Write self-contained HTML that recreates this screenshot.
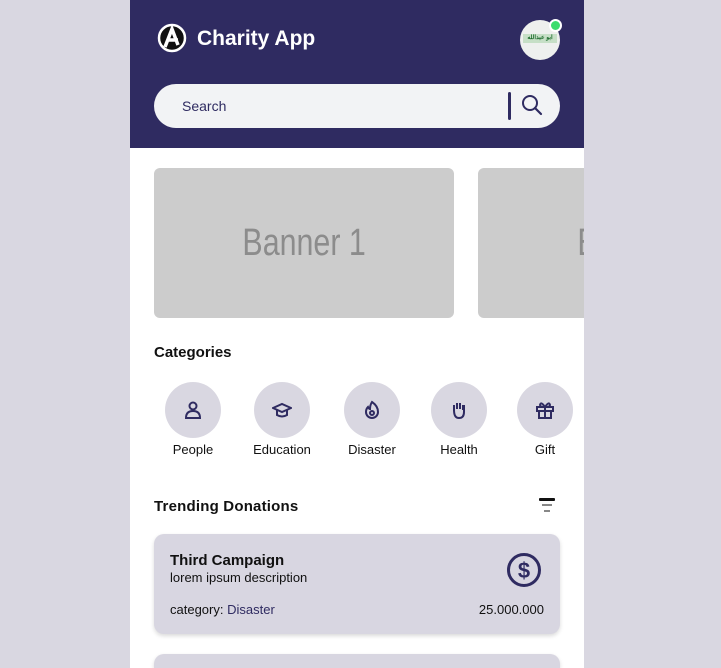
<!DOCTYPE html>
<html><head><style>
*{margin:0;padding:0;box-sizing:border-box}
body{width:721px;height:668px;background:#d9d7e1;font-family:"Liberation Sans",sans-serif;overflow:hidden;position:relative}
.ph{position:absolute;left:130px;top:0;width:454px;height:668px;background:#fff;overflow:hidden}
.hd{position:absolute;left:0;top:0;width:454px;height:148px;background:#2f2b61}
.t{position:absolute;color:#111}
.circ{position:absolute;width:56px;height:56px;border-radius:50%;background:#d9d7e1;top:382px;display:flex;align-items:center;justify-content:center}
.lab{position:absolute;top:442px;font-size:13px;color:#111;width:90px;text-align:center}
.card{position:absolute;left:24px;width:406px;height:100px;background:#d8d6e1;border-radius:10px;box-shadow:0 2px 4px rgba(0,0,0,.15)}
</style></head><body>
<div class="ph">
<div class="hd">
<svg style="position:absolute;left:27px;top:23px" width="30" height="30" viewBox="0 0 30 30"><circle cx="15" cy="15" r="13" fill="#111" stroke="#fff" stroke-width="2.5"/><path d="M8 24 L15 6 L21 22 M11 17 H21" stroke="#fff" stroke-width="3.5" fill="none"/></svg>
<div style="position:absolute;left:67px;top:27px;color:#fff;font-size:21px;font-weight:bold">Charity App</div>
<div style="position:absolute;left:390px;top:20px;width:40px;height:40px;border-radius:50%;background:#eef0ee;overflow:hidden"><div style="position:absolute;left:3px;top:14px;width:34px;height:9px;background:#c6dfc6;color:#1a6a2a;font-size:6px;text-align:center;font-weight:bold">ابو عبدالله</div></div>
<div style="position:absolute;left:419px;top:19px;width:13px;height:13px;border-radius:50%;background:#3ddc6d;border:2px solid #fff"></div>
<div style="position:absolute;left:24px;top:84px;width:406px;height:44px;border-radius:22px;background:#f2f3f5">
<div style="position:absolute;left:28px;top:14px;font-size:14px;color:#2f2b61">Search</div>
<div style="position:absolute;left:354px;top:8px;width:3px;height:28px;background:#2f2b61;border-radius:2px"></div>
<svg style="position:absolute;left:366px;top:9px" width="24" height="24" viewBox="0 0 24 24"><circle cx="10" cy="10" r="7" stroke="#2f2b61" stroke-width="2" fill="none"/><path d="M15 15 L21 21" stroke="#2f2b61" stroke-width="2.2" stroke-linecap="round"/></svg>
</div>
</div>
<div style="position:absolute;left:24px;top:168px;width:300px;height:150px;background:#ccc;border-radius:6px;display:flex;align-items:center;justify-content:center;color:#8c8c8c;font-size:38px"><span style="transform:scaleX(.8);display:inline-block">Banner 1</span></div>
<div style="position:absolute;left:348px;top:168px;width:300px;height:150px;background:#ccc;border-radius:6px;color:#8c8c8c;font-size:38px;line-height:150px;padding-left:84px"><span style="transform:scaleX(.8);display:inline-block">Banner 2</span></div>
<div class="t" style="left:24px;top:344px;font-size:15px;font-weight:bold">Categories</div>
<div class="circ" style="left:35px"><svg width="20" height="20" viewBox="0 0 20 20" fill="none" stroke="#2f2b61" stroke-width="2"><circle cx="10" cy="6" r="3.5"/><path d="M3 18 Q3 11 10 11 Q17 11 17 18 Z"/></svg></div>
<div class="circ" style="left:124px"><svg width="20" height="20" viewBox="0 0 20 20" fill="none" stroke="#2f2b61" stroke-width="2"><path d="M1 8 L10 4 L19 8 L10 12 Z M5 10 V15 Q10 18 15 15 V10"/></svg></div>
<div class="circ" style="left:214px"><svg width="20" height="20" viewBox="0 0 20 20" fill="none" stroke="#2f2b61" stroke-width="2"><path d="M10 2 Q16 6 16 12 A6 6 0 0 1 4 12 Q4 9 6 7 Q7 9 8 9 Q8 5 10 2 Z"/><circle cx="10" cy="13" r="2"/></svg></div>
<div class="circ" style="left:301px"><svg width="20" height="20" viewBox="0 0 20 20" fill="none" stroke="#2f2b61" stroke-width="2"><path d="M5 11 V5 M8 9 V3 M11 9 V3 M14 10 V5 M5 10 Q5 18 10 18 Q15 18 15 12 V5"/></svg></div>
<div class="circ" style="left:387px"><svg width="20" height="20" viewBox="0 0 20 20" fill="none" stroke="#2f2b61" stroke-width="2"><rect x="2" y="7" width="16" height="4"/><rect x="4" y="11" width="12" height="7"/><path d="M10 7 V18 M10 7 Q6 1 5 5 Q5 7 10 7 Q15 7 15 5 Q14 1 10 7"/></svg></div>
<div class="lab" style="left:18px">People</div>
<div class="lab" style="left:107px">Education</div>
<div class="lab" style="left:197px">Disaster</div>
<div class="lab" style="left:284px">Health</div>
<div class="lab" style="left:370px">Gift</div>
<div class="t" style="left:24px;top:498px;font-size:15px;font-weight:bold;letter-spacing:.2px">Trending Donations</div>
<div style="position:absolute;left:409px;top:498px;width:16px;height:3px;background:#111;border-radius:1px"></div>
<div style="position:absolute;left:412px;top:504px;width:10px;height:2px;background:#888"></div>
<div style="position:absolute;left:414px;top:510px;width:6px;height:2px;background:#888"></div>
<div class="card" style="top:534px">
<div class="t" style="left:16px;top:18px;font-size:15px;font-weight:bold">Third Campaign</div>
<div class="t" style="left:16px;top:36px;font-size:13px">lorem ipsum description</div>
<div class="t" style="left:16px;top:68px;font-size:13px">category: <span style="color:#2f2b61">Disaster</span></div>
<div class="t" style="right:16px;top:68px;font-size:13px">25.000.000</div>
<svg style="position:absolute;left:352px;top:18px" width="36" height="36" viewBox="0 0 36 36"><circle cx="18" cy="18" r="15.5" stroke="#2f2b61" stroke-width="3" fill="none"/><text x="18" y="26" text-anchor="middle" font-family="Liberation Sans" font-weight="bold" font-size="22" fill="#2f2b61">$</text></svg>
</div>
<div class="card" style="top:654px;height:14px;border-radius:10px 10px 0 0"></div>
</div>
</body></html>
